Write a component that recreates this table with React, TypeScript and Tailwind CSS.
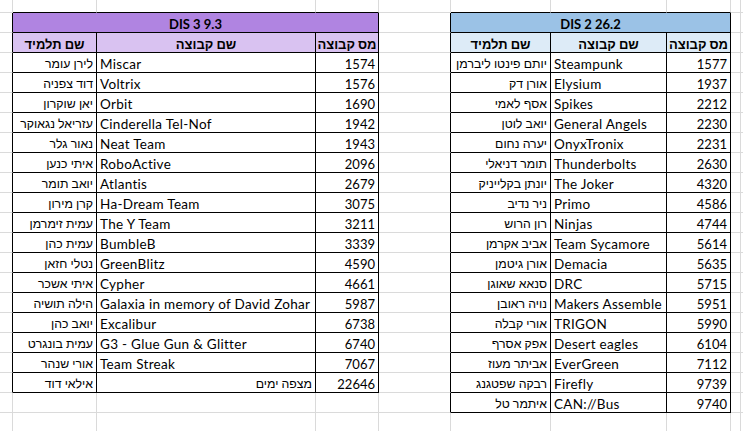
import React from "react";

type Row = [string, string, string];

const LEFT: Row[] = [
  ["לירן עומר", "Miscar", "1574"],
  ["דוד צפניה", "Voltrix", "1576"],
  ["יאן שוקרון", "Orbit", "1690"],
  ["עזריאל נגאוקר", "Cinderella Tel-Nof", "1942"],
  ["נאור גלר", "Neat Team", "1943"],
  ["איתי כנען", "RoboActive", "2096"],
  ["יואב תומר", "Atlantis", "2679"],
  ["קרן מירון", "Ha-Dream Team", "3075"],
  ["עמית זימרמן", "The Y Team", "3211"],
  ["עמית כהן", "BumbleB", "3339"],
  ["נטלי חזאן", "GreenBlitz", "4590"],
  ["איתי אשכר", "Cypher", "4661"],
  ["הילה תושיה", "Galaxia in memory of David Zohar", "5987"],
  ["יואב כהן", "Excalibur", "6738"],
  ["עמית בונגרט", "G3 - Glue Gun & Glitter", "6740"],
  ["אורי שנהר", "Team Streak", "7067"],
  ["אילאי דוד", "מצפה ימים", "22646"],
];

const RIGHT: Row[] = [
  ["יותם פינטו ליברמן", "Steampunk", "1577"],
  ["אורן דק", "Elysium", "1937"],
  ["אסף לאמי", "Spikes", "2212"],
  ["יואב לוטן", "General Angels", "2230"],
  ["יערה נחום", "OnyxTronix", "2231"],
  ["תומר דניאלי", "Thunderbolts", "2630"],
  ["יונתן בקלייניק", "The Joker", "4320"],
  ["ניר נדיב", "Primo", "4586"],
  ["רון הרוש", "Ninjas", "4744"],
  ["אביב אקרמן", "Team Sycamore", "5614"],
  ["אורן גיטמן", "Demacia", "5635"],
  ["סנאא שאוגן", "DRC", "5715"],
  ["נויה ראובן", "Makers Assemble", "5951"],
  ["אורי קבלה", "TRIGON", "5990"],
  ["אפק אסרף", "Desert eagles", "6104"],
  ["אביתר מעוז", "EverGreen", "7112"],
  ["רבקה שפטגנג", "Firefly", "9739"],
  ["איתמר טל", "CAN://Bus", "9740"],
];

// sheet columns (px): A..J
const COLS = [13, 84, 219, 63, 72, 100, 116, 64, 10, 40];
const ROWS = 22; // row 0 is the partial top row

const isHebrew = (s: string) => /[\u0590-\u05FF]/.test(s);

function inTable(r: number, c: number) {
  if (c >= 1 && c <= 3 && r >= 1 && r <= 2 + LEFT.length) return true;
  if (c >= 5 && c <= 7 && r >= 1 && r <= 2 + RIGHT.length) return true;
  return false;
}

type Content = { text: string; cls: string };

function cellContent(r: number, c: number): Content | null {
  const left = c >= 1 && c <= 3;
  const right = c >= 5 && c <= 7;
  if (!left && !right) return null;
  const idx = left ? c - 1 : c - 5;
  if (r === 2) {
    const heads = ["שם תלמיד", "שם קבוצה", "מס קבוצה"];
    return {
      text: heads[idx],
      cls: `justify-center font-bold text-[13px] ${left ? "bg-[#d9c2f1]" : "bg-[#ddebf7]"}`,
    };
  }
  const d = (left ? LEFT : RIGHT)[r - 3];
  if (!d) return null;
  const text = d[idx];
  if (idx === 2) return { text, cls: "justify-end text-[13px]" };
  if (isHebrew(text)) return { text, cls: "justify-end text-[12.3px] pb-[2px]" };
  return { text, cls: "justify-start text-[13.5px] tracking-[0.3px]" };
}

function Cell({
  width,
  r,
  c,
  children,
  className = "",
}: {
  width: number;
  r: number;
  c: number;
  children?: React.ReactNode;
  className?: string;
}) {
  const rb = inTable(r, c) || inTable(r, c + 1);
  const bb = inTable(r, c) || inTable(r + 1, c);
  return (
    <div
      style={{ width }}
      className={`flex shrink-0 items-end overflow-hidden whitespace-nowrap border-r border-b px-[3px] pb-[1px] ${
        rb ? "border-r-black" : "border-r-[#dadada]"
      } ${bb ? "border-b-black" : "border-b-[#dadada]"} ${className}`}
    >
      {children}
    </div>
  );
}

export default function App() {
  return (
    <div
      className="h-[431px] w-[743px] overflow-hidden bg-white text-[14px] leading-none text-black"
      style={{ fontFamily: 'Lato, "Liberation Sans", "DejaVu Sans", sans-serif' }}
    >
      {Array.from({ length: ROWS }).map((_, r) => {
        const h = r === 0 ? "h-[13px]" : "h-[20px]";
        if (r === 1) {
          return (
            <div key={r} className={`flex ${h}`}>
              <Cell width={COLS[0]} r={r} c={0} />
              <Cell
                width={COLS[1] + COLS[2] + COLS[3]}
                r={r}
                c={3}
                className="justify-center bg-[#b084e1] text-[13px] font-bold"
              >
                DIS 3 9.3
              </Cell>
              <Cell width={COLS[4]} r={r} c={4} />
              <Cell
                width={COLS[5] + COLS[6] + COLS[7]}
                r={r}
                c={7}
                className="justify-center bg-[#9bc2e6] text-[13px] font-bold"
              >
                DIS 2 26.2
              </Cell>
              <Cell width={COLS[8]} r={r} c={8} />
              <Cell width={COLS[9]} r={r} c={9} />
            </div>
          );
        }
        return (
          <div key={r} className={`flex ${h}`}>
            {COLS.map((w, c) => {
              const content = r >= 2 ? cellContent(r, c) : null;
              return (
                <Cell key={c} width={w} r={r} c={c} className={content?.cls ?? ""}>
                  {content?.text}
                </Cell>
              );
            })}
          </div>
        );
      })}
    </div>
  );
}
